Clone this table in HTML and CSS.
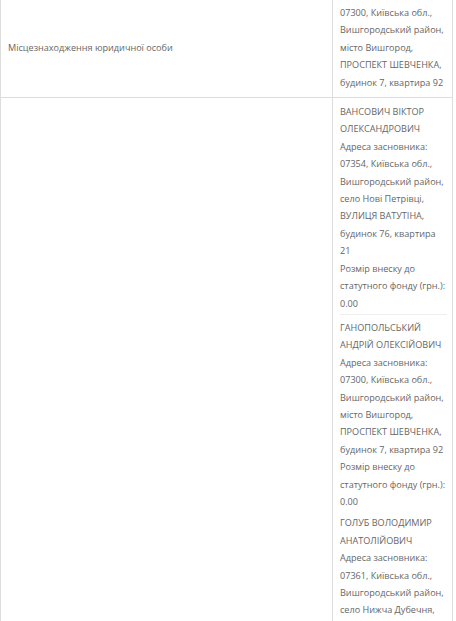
FILE: index.html
```html
<!DOCTYPE html>
<html lang="uk">
<head>
<meta charset="utf-8">
<link rel="stylesheet" href="styles.css">
</head>
<body>
<table class="info">
  <tr>
    <td class="label">Місцезнаходження юридичної особи</td>
    <td class="value">07300, Київська обл., Вишгородський район, місто Вишгород, ПРОСПЕКТ ШЕВЧЕНКА, будинок 7, квартира 92</td>
  </tr>
  <tr>
    <td class="label"></td>
    <td class="value">
      <div class="founder">ВАНСОВИЧ ВІКТОР ОЛЕКСАНДРОВИЧ<br>Адреса засновника: 07354, Київська обл., Вишгородський район, село Нові Петрівці, ВУЛИЦЯ ВАТУТІНА, будинок 76, квартира 21<br>Розмір внеску до статутного фонду (грн.): 0.00</div>
      <div class="founder">ГАНОПОЛЬСЬКИЙ АНДРІЙ ОЛЕКСІЙОВИЧ<br>Адреса засновника: 07300, Київська обл., Вишгородський район, місто Вишгород, ПРОСПЕКТ ШЕВЧЕНКА, будинок 7, квартира 92<br>Розмір внеску до статутного фонду (грн.): 0.00</div>
      <div class="founder">ГОЛУБ ВОЛОДИМИР АНАТОЛІЙОВИЧ<br>Адреса засновника: 07361, Київська обл., Вишгородський район, село Нижча Дубечня, ВУЛИЦЯ ШКІЛЬНА, будинок 1<br>Розмір внеску до статутного фонду (грн.): 0.00</div>
    </td>
  </tr>
</table>
</body>
</html>
```
FILE: styles.css
```css
html, body {
  margin: 0;
  padding: 0;
  background: #fff;
}
body {
  font-family: "Open Sans", "Noto Sans", sans-serif;
  font-size: 9.1px;
  line-height: 17.4px;
  color: #666;
}
.info {
  border-collapse: collapse;
  width: 453px;
  margin-top: -3px;
}
.info td {
  border: 1px solid #ddd;
  padding: 6px 7px;
  vertical-align: middle;
}
.info .label {
  width: 317px;
}
.info .value {
  vertical-align: top;
  padding: 6px 5px 6px 7px;
}
.info tr + tr .value {
  padding-top: 5px;
}
.founder {
  padding-top: 4px;
}
.founder:first-child {
  padding-top: 0;
  padding-bottom: 2px;
  border-bottom: 1px solid #eee;
}
```
